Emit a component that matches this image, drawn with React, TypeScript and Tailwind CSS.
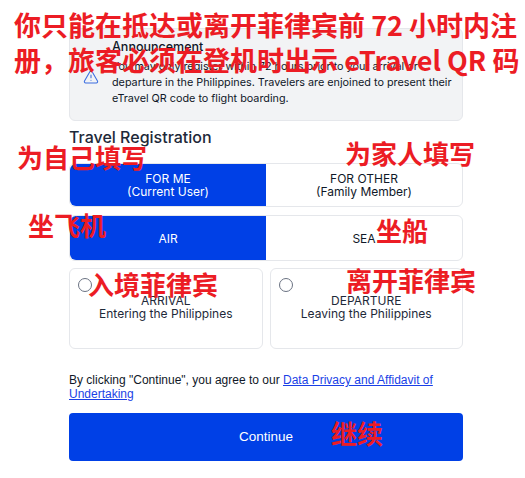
import { TriangleAlert } from "lucide-react";

const ui = "font-['Inter',sans-serif]";
const arial = "font-['Liberation_Sans',Arial,sans-serif]";
const note =
  "absolute whitespace-nowrap font-['Noto_Sans_CJK_SC',sans-serif] font-bold text-[#ec1c24] leading-none";

function Segment({
  left,
  right,
  height,
}: {
  left: React.ReactNode;
  right: React.ReactNode;
  height: string;
}) {
  return (
    <div className={`flex ${height} rounded-md border border-gray-200 text-[12px] leading-[13px]`}>
      <div className="flex w-1/2 flex-col items-center justify-center rounded-l-md bg-[#0040e6] text-white">
        {left}
      </div>
      <div className="flex w-1/2 flex-col items-center justify-center text-gray-900">{right}</div>
    </div>
  );
}

function RadioCard({ title, sub }: { title: string; sub: string }) {
  return (
    <div className="h-[81px] flex-1 rounded-md border border-gray-200 px-[8px] pt-[9px]">
      <div className="h-[14px] w-[14px] rounded-full border border-gray-500" />
      <div className="mt-[2px] text-center text-[12px] leading-[13px] text-gray-800">
        <div>{title}</div>
        <div>{sub}</div>
      </div>
    </div>
  );
}

export default function App() {
  return (
    <div className={`relative h-[478px] w-[525px] overflow-hidden bg-white ${ui}`}>
      <div className="ml-[69px] w-[394px] pt-[28px]">
        <div className="flex h-[93px] gap-[13px] rounded-md border border-gray-200 bg-[#f2f3f5] pl-[13px] pr-[8px] pt-[10px]">
          <TriangleAlert className="mt-[30px] h-[16px] w-[16px] shrink-0 text-[#3a6de0]" strokeWidth={1.6} />
          <div className="text-gray-900">
            <div className="text-[12.5px] font-medium leading-[16px]">Announcement</div>
            <p className="mt-[4px] whitespace-nowrap text-[10.8px] leading-[16px]">
              You may only register within 72 hours prior to your arrival or
              <br />
              departure in the Philippines. Travelers are enjoined to present their
              <br />
              eTravel QR code to flight boarding.
            </p>
          </div>
        </div>

        <h2 className="mt-[6px] text-[16px] font-medium leading-[20px] text-gray-800">Travel Registration</h2>

        <div className="mt-[16px] flex flex-col gap-[8px]">
          <Segment
            height="h-[44px]"
            left={
              <>
                <span>FOR ME</span>
                <span>(Current User)</span>
              </>
            }
            right={
              <>
                <span>FOR OTHER</span>
                <span>(Family Member)</span>
              </>
            }
          />
          <Segment height="h-[46px]" left={<span>AIR</span>} right={<span>SEA</span>} />
        </div>

        <div className="mt-[7px] flex gap-[7px]">
          <RadioCard title="ARRIVAL" sub="Entering the Philippines" />
          <RadioCard title="DEPARTURE" sub="Leaving the Philippines" />
        </div>

        <p className={`mt-[25px] text-[12px] leading-[13.5px] text-gray-900 ${arial}`}>
          By clicking "Continue", you agree to our{" "}
          <a href="#" className="text-[#1a3fe6] underline">
            Data Privacy and Affidavit of Undertaking
          </a>
        </p>

        <button
          type="button"
          className={`mt-[12px] h-[48px] w-full rounded-[4px] bg-[#0040e6] text-[13.5px] text-white ${arial}`}
        >
          Continue
        </button>
      </div>

      <div className={`${note} left-[14px] top-[11px] text-[27px]`}>你只能在抵达或离开菲律宾前 72 小时内注</div>
      <div className={`${note} left-[14px] top-[46px] text-[27px]`}>册，旅客必须在登机时出示 eTravel QR 码</div>
      <div className={`${note} left-[17px] top-[144px] text-[26px]`}>为自己填写</div>
      <div className={`${note} left-[345px] top-[140px] text-[26px]`}>为家人填写</div>
      <div className={`${note} left-[28px] top-[212px] text-[26px]`}>坐飞机</div>
      <div className={`${note} left-[376px] top-[217px] text-[26px]`}>坐船</div>
      <div className={`${note} left-[88px] top-[271px] text-[26px]`}>入境菲律宾</div>
      <div className={`${note} left-[346px] top-[267px] text-[26px]`}>离开菲律宾</div>
      <div className={`${note} left-[331px] top-[420px] text-[26px]`}>继续</div>
    </div>
  );
}
